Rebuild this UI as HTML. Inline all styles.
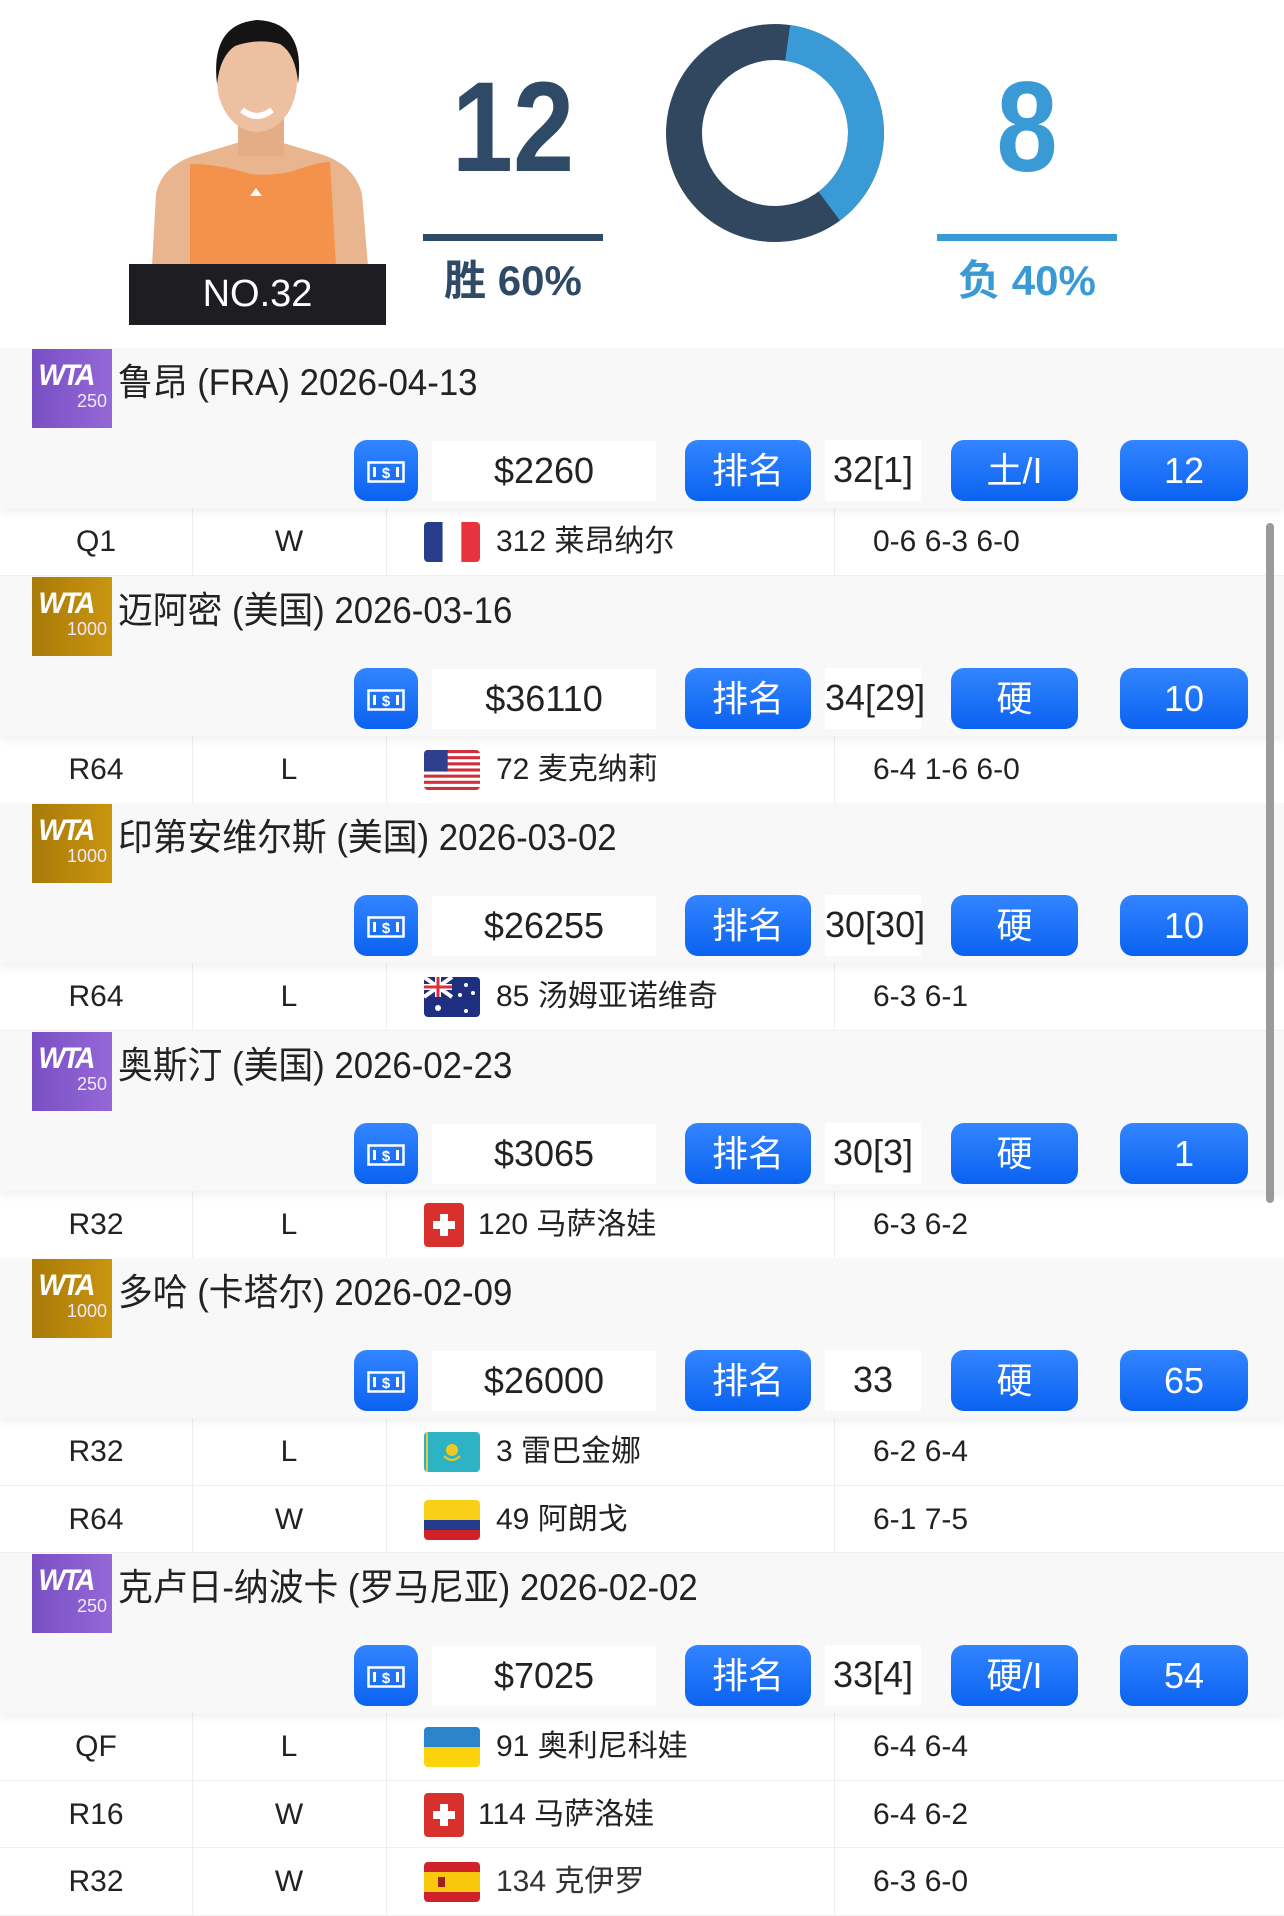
<!DOCTYPE html>
<html><head><meta charset="utf-8">
<style>
*{margin:0;padding:0;box-sizing:border-box}
body{width:1284px;height:1902px;overflow:hidden;background:#fff;font-family:"Liberation Sans Narrow","Liberation Sans","Noto Sans CJK SC",sans-serif;color:#222;position:relative}
.abs{position:absolute}
.sec{position:absolute;left:0;width:1284px}
.hd{position:relative;height:160px;background:#f8f8f9;box-shadow:0 5px 8px rgba(0,0,0,.05);z-index:2}
.logo{position:absolute;left:32px;top:1px;width:80px;height:79px;color:#fff}
.logo.p{background:linear-gradient(90deg,#7a4fc4,#9468d6)}
.logo.g{background:linear-gradient(90deg,#a87a08,#c9960f)}
.logo .w{position:absolute;left:5px;top:10px;font:italic bold 30px "Liberation Sans",sans-serif;letter-spacing:-3px;transform:scaleX(.95)}
.logo .n{position:absolute;right:5px;top:42px;font-size:18px;color:#f0e8ff}
.title{position:absolute;left:118px;top:10px;font-size:37px;line-height:50px;color:#222;white-space:nowrap;transform:scaleX(.94);transform-origin:left center}
.btn{position:absolute;top:92px;height:61px;border-radius:13px;background:linear-gradient(#3385ff,#0a62f0);color:#fff;font-size:36px;line-height:61px;text-align:center}
.box{position:absolute;top:93px;height:60px;background:#fff;font-size:36px;line-height:60px;text-align:center;color:#222}
.row{position:relative;height:67.5px;background:#fff;border-bottom:1px solid #f0f0f0;font-size:30px}
.row div{position:absolute;top:0;line-height:67px}
.vl{position:absolute;top:0;bottom:0;width:1px;background:#eee}
.flag{position:absolute;left:424px;top:14px;width:56px;height:40px;border-radius:4px;overflow:hidden}
.big{transform:scaleX(.86)}
</style></head><body>

<svg class="abs" style="left:140px;top:14px" width="240" height="252" viewBox="0 0 240 252">
  <path d="M12 252 L16 180 Q22 150 60 140 L100 128 L140 128 L180 140 Q214 150 222 180 L228 252Z" fill="#e9b58e"/>
  <path d="M50 252 L50 150 Q80 150 110 160 Q130 162 150 158 Q178 148 190 148 L196 252Z" fill="#f4914a"/>
  <rect x="98" y="98" width="46" height="44" fill="#e5ad86"/>
  <ellipse cx="117" cy="66" rx="40" ry="52" fill="#ecc0a0"/>
  <path d="M77 70 Q70 10 117 6 Q166 8 158 70 Q156 40 140 30 Q118 24 95 32 Q80 42 77 70Z" fill="#141414"/>
  <path d="M102 96 Q117 108 132 96" stroke="#fff" stroke-width="6" fill="none"/>
  <path d="M110 182 l6 -8 l6 8z" fill="#fff"/>
</svg>
<div class="abs" style="left:129px;top:264px;width:257px;height:61px;background:#1e1e22;color:#fff;font-size:38px;line-height:61px;text-align:center">NO.32</div>

<div class="abs big" style="left:423px;top:64px;width:180px;text-align:center;font:bold 128px/128px 'Liberation Sans Narrow','Liberation Sans',sans-serif;color:#2f4a66">12</div>
<div class="abs" style="left:423px;top:234px;width:180px;height:7px;background:#2f4a66"></div>
<div class="abs" style="left:423px;top:256px;width:180px;text-align:center;font-weight:bold;font-size:42px;line-height:50px;color:#2f4a66">胜 60%</div>

<svg class="abs" style="left:660px;top:18px" width="230" height="230" viewBox="0 0 230 230">
  <circle cx="115" cy="115" r="91" fill="none" stroke="#30475f" stroke-width="36"/>
  <circle cx="115" cy="115" r="91" fill="none" stroke="#3a9ad6" stroke-width="36" stroke-dasharray="215 571.8" transform="rotate(-82 115 115)"/>
</svg>

<div class="abs big" style="left:937px;top:64px;width:180px;text-align:center;font:bold 128px/128px 'Liberation Sans Narrow','Liberation Sans',sans-serif;color:#3a9ad6">8</div>
<div class="abs" style="left:937px;top:234px;width:180px;height:7px;background:#3a9ad6"></div>
<div class="abs" style="left:937px;top:256px;width:180px;text-align:center;font-weight:bold;font-size:42px;line-height:50px;color:#3a9ad6">负 40%</div>

<svg width="0" height="0" style="position:absolute">
<defs>
<g id="money"><rect x="1.5" y="1.5" width="35" height="19" fill="none" stroke="#fff" stroke-width="2.5"/><rect x="6" y="6" width="3" height="10" fill="#fff"/><rect x="29" y="6" width="3" height="10" fill="#fff"/><text x="19" y="17" text-anchor="middle" font-family="Liberation Sans" font-weight="bold" font-size="15" fill="#fff">$</text></g>
</defs></svg>

<div class="sec" style="top:348px">
 <div class="hd">
  <div class="logo p"><span class="w">WTA</span><span class="n">250</span></div>
  <div class="title">鲁昂 (FRA) 2026-04-13</div>
  <div class="btn" style="left:354px;width:64px"><svg style="margin-top:19px" width="38" height="22"><use href="#money"/></svg></div>
  <div class="box" style="left:432px;width:224px">$2260</div>
  <div class="btn" style="left:685px;width:126px">排名</div>
  <div class="box" style="left:825px;width:96px;top:92px;height:61px">32[1]</div>
  <div class="btn" style="left:951px;width:127px">土/I</div>
  <div class="btn" style="left:1120px;width:128px">12</div>
 </div>
 <div class="row"><div style="left:0;width:192px;text-align:center">Q1</div><span class="vl" style="left:192px"></span><div style="left:192px;width:194px;text-align:center">W</div><span class="vl" style="left:386px"></span>
  <svg class="flag" viewBox="0 0 3 2" preserveAspectRatio="none"><rect width="1" height="2" fill="#283c8c"/><rect x="1" width="1" height="2" fill="#fff"/><rect x="2" width="1" height="2" fill="#e8333e"/></svg>
  <div style="left:496px">312 莱昂纳尔</div><span class="vl" style="left:834px"></span><div style="left:873px">0-6 6-3 6-0</div></div>
</div>

<div class="sec" style="top:576px">
 <div class="hd">
  <div class="logo g"><span class="w">WTA</span><span class="n">1000</span></div>
  <div class="title">迈阿密 (美国) 2026-03-16</div>
  <div class="btn" style="left:354px;width:64px"><svg style="margin-top:19px" width="38" height="22"><use href="#money"/></svg></div>
  <div class="box" style="left:432px;width:224px">$36110</div>
  <div class="btn" style="left:685px;width:126px">排名</div>
  <div class="box" style="left:825px;width:96px;top:92px;height:61px">34[29]</div>
  <div class="btn" style="left:951px;width:127px">硬</div>
  <div class="btn" style="left:1120px;width:128px">10</div>
 </div>
 <div class="row"><div style="left:0;width:192px;text-align:center">R64</div><span class="vl" style="left:192px"></span><div style="left:192px;width:194px;text-align:center">L</div><span class="vl" style="left:386px"></span>
  <svg class="flag" viewBox="0 0 26 13" preserveAspectRatio="none"><rect width="26" height="13" fill="#fff"/><g fill="#d0303c"><rect y="0" width="26" height="1"/><rect y="2" width="26" height="1"/><rect y="4" width="26" height="1"/><rect y="6" width="26" height="1"/><rect y="8" width="26" height="1"/><rect y="10" width="26" height="1"/><rect y="12" width="26" height="1"/></g><rect width="11" height="7" fill="#2d3f8e"/></svg>
  <div style="left:496px">72 麦克纳莉</div><span class="vl" style="left:834px"></span><div style="left:873px">6-4 1-6 6-0</div></div>
</div>

<div class="sec" style="top:803px">
 <div class="hd">
  <div class="logo g"><span class="w">WTA</span><span class="n">1000</span></div>
  <div class="title">印第安维尔斯 (美国) 2026-03-02</div>
  <div class="btn" style="left:354px;width:64px"><svg style="margin-top:19px" width="38" height="22"><use href="#money"/></svg></div>
  <div class="box" style="left:432px;width:224px">$26255</div>
  <div class="btn" style="left:685px;width:126px">排名</div>
  <div class="box" style="left:825px;width:96px;top:92px;height:61px">30[30]</div>
  <div class="btn" style="left:951px;width:127px">硬</div>
  <div class="btn" style="left:1120px;width:128px">10</div>
 </div>
 <div class="row"><div style="left:0;width:192px;text-align:center">R64</div><span class="vl" style="left:192px"></span><div style="left:192px;width:194px;text-align:center">L</div><span class="vl" style="left:386px"></span>
  <svg class="flag" viewBox="0 0 56 40" preserveAspectRatio="none"><rect width="56" height="40" fill="#1f2f80"/><path d="M0 0L28 20M28 0L0 20" stroke="#fff" stroke-width="4"/><path d="M14 0V20M0 10H28" stroke="#fff" stroke-width="6"/><path d="M14 0V20M0 10H28" stroke="#d8303c" stroke-width="3"/><g fill="#fff"><circle cx="14" cy="31" r="3"/><circle cx="42" cy="8" r="2"/><circle cx="36" cy="18" r="2"/><circle cx="49" cy="16" r="2"/><circle cx="42" cy="34" r="2"/></g></svg>
  <div style="left:496px">85 汤姆亚诺维奇</div><span class="vl" style="left:834px"></span><div style="left:873px">6-3 6-1</div></div>
</div>

<div class="sec" style="top:1031px">
 <div class="hd">
  <div class="logo p"><span class="w">WTA</span><span class="n">250</span></div>
  <div class="title">奥斯汀 (美国) 2026-02-23</div>
  <div class="btn" style="left:354px;width:64px"><svg style="margin-top:19px" width="38" height="22"><use href="#money"/></svg></div>
  <div class="box" style="left:432px;width:224px">$3065</div>
  <div class="btn" style="left:685px;width:126px">排名</div>
  <div class="box" style="left:825px;width:96px;top:92px;height:61px">30[3]</div>
  <div class="btn" style="left:951px;width:127px">硬</div>
  <div class="btn" style="left:1120px;width:128px">1</div>
 </div>
 <div class="row"><div style="left:0;width:192px;text-align:center">R32</div><span class="vl" style="left:192px"></span><div style="left:192px;width:194px;text-align:center">L</div><span class="vl" style="left:386px"></span>
  <svg class="flag" style="left:424px;top:12px;width:40px;height:44px" viewBox="0 0 40 44" preserveAspectRatio="none"><rect width="40" height="44" fill="#d8302c"/><rect x="16" y="11" width="8" height="22" fill="#fff"/><rect x="9" y="18" width="22" height="8" fill="#fff"/></svg>
  <div style="left:478px">120 马萨洛娃</div><span class="vl" style="left:834px"></span><div style="left:873px">6-3 6-2</div></div>
</div>

<div class="sec" style="top:1258px">
 <div class="hd">
  <div class="logo g"><span class="w">WTA</span><span class="n">1000</span></div>
  <div class="title">多哈 (卡塔尔) 2026-02-09</div>
  <div class="btn" style="left:354px;width:64px"><svg style="margin-top:19px" width="38" height="22"><use href="#money"/></svg></div>
  <div class="box" style="left:432px;width:224px">$26000</div>
  <div class="btn" style="left:685px;width:126px">排名</div>
  <div class="box" style="left:825px;width:96px;top:92px;height:61px">33</div>
  <div class="btn" style="left:951px;width:127px">硬</div>
  <div class="btn" style="left:1120px;width:128px">65</div>
 </div>
 <div class="row"><div style="left:0;width:192px;text-align:center">R32</div><span class="vl" style="left:192px"></span><div style="left:192px;width:194px;text-align:center">L</div><span class="vl" style="left:386px"></span>
  <svg class="flag" viewBox="0 0 56 40" preserveAspectRatio="none"><rect width="56" height="40" fill="#2eb3c4"/><rect x="2" y="0" width="2" height="40" fill="#e8c840"/><circle cx="28" cy="18" r="6" fill="#f0c820"/><path d="M20 24Q28 32 36 24" stroke="#f0c820" stroke-width="2" fill="none"/></svg>
  <div style="left:496px">3 雷巴金娜</div><span class="vl" style="left:834px"></span><div style="left:873px">6-2 6-4</div></div>
 <div class="row"><div style="left:0;width:192px;text-align:center">R64</div><span class="vl" style="left:192px"></span><div style="left:192px;width:194px;text-align:center">W</div><span class="vl" style="left:386px"></span>
  <svg class="flag" viewBox="0 0 4 4" preserveAspectRatio="none"><rect width="4" height="2" fill="#f8d018"/><rect y="2" width="4" height="1" fill="#233c8c"/><rect y="3" width="4" height="1" fill="#d02028"/></svg>
  <div style="left:496px">49 阿朗戈</div><span class="vl" style="left:834px"></span><div style="left:873px">6-1 7-5</div></div>
</div>

<div class="sec" style="top:1553px">
 <div class="hd">
  <div class="logo p"><span class="w">WTA</span><span class="n">250</span></div>
  <div class="title">克卢日-纳波卡 (罗马尼亚) 2026-02-02</div>
  <div class="btn" style="left:354px;width:64px"><svg style="margin-top:19px" width="38" height="22"><use href="#money"/></svg></div>
  <div class="box" style="left:432px;width:224px">$7025</div>
  <div class="btn" style="left:685px;width:126px">排名</div>
  <div class="box" style="left:825px;width:96px;top:92px;height:61px">33[4]</div>
  <div class="btn" style="left:951px;width:127px">硬/I</div>
  <div class="btn" style="left:1120px;width:128px">54</div>
 </div>
 <div class="row"><div style="left:0;width:192px;text-align:center">QF</div><span class="vl" style="left:192px"></span><div style="left:192px;width:194px;text-align:center">L</div><span class="vl" style="left:386px"></span>
  <svg class="flag" viewBox="0 0 2 2" preserveAspectRatio="none"><rect width="2" height="1" fill="#2b84cc"/><rect y="1" width="2" height="1" fill="#fcd20c"/></svg>
  <div style="left:496px">91 奥利尼科娃</div><span class="vl" style="left:834px"></span><div style="left:873px">6-4 6-4</div></div>
 <div class="row"><div style="left:0;width:192px;text-align:center">R16</div><span class="vl" style="left:192px"></span><div style="left:192px;width:194px;text-align:center">W</div><span class="vl" style="left:386px"></span>
  <svg class="flag" style="left:424px;top:12px;width:40px;height:44px" viewBox="0 0 40 44" preserveAspectRatio="none"><rect width="40" height="44" fill="#d8302c"/><rect x="16" y="11" width="8" height="22" fill="#fff"/><rect x="9" y="18" width="22" height="8" fill="#fff"/></svg>
  <div style="left:478px">114 马萨洛娃</div><span class="vl" style="left:834px"></span><div style="left:873px">6-4 6-2</div></div>
 <div class="row"><div style="left:0;width:192px;text-align:center">R32</div><span class="vl" style="left:192px"></span><div style="left:192px;width:194px;text-align:center">W</div><span class="vl" style="left:386px"></span>
  <svg class="flag" viewBox="0 0 4 4" preserveAspectRatio="none"><rect width="4" height="4" fill="#d0202a"/><rect y="1" width="4" height="2" fill="#f8c80c"/><rect x="1" y="1.5" width="0.5" height="1" fill="#a02020"/></svg>
  <div style="left:496px;color:#333">134 克伊罗</div><span class="vl" style="left:834px"></span><div style="left:873px">6-3 6-0</div></div>
</div>

<div class="abs" style="left:1266px;top:523px;width:8px;height:680px;border-radius:4px;background:#9a9a9a;z-index:5"></div>
</body></html>
